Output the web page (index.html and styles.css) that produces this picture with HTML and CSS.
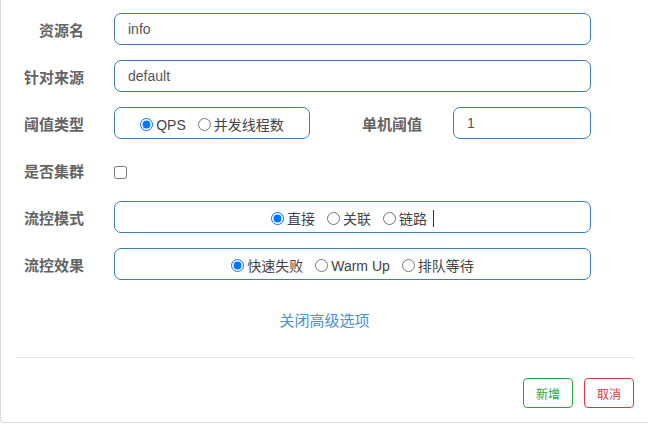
FILE: index.html
```html
<!DOCTYPE html>
<html lang="zh-CN">
<head>
    <meta charset="UTF-8">
    <title>新增流控规则</title>
    <link rel="stylesheet" href="styles.css">
</head>
<body>
    <div class="dialog">
        <form class="form">
            <!--资源名-->
            <div class="row">
                <label class="label">资源名</label>
                <input class="input" type="text" value="info">
            </div>
            <!--针对来源-->
            <div class="row">
                <label class="label">针对来源</label>
                <input class="input" type="text" value="default">
            </div>
            <!--阈值类型 + 单机阈值-->
            <div class="row">
                <label class="label">阈值类型</label>
                <div class="split">
                    <div class="box">
                        <label class="radio"><input type="radio" name="grade" checked>QPS</label>
                        <label class="radio"><input type="radio" name="grade">并发线程数</label>
                    </div>
                    <label class="label">单机阈值</label>
                    <input class="input" type="text" value="1">
                </div>
            </div>
            <!--是否集群-->
            <div class="row">
                <label class="label">是否集群</label>
                <div class="check"><input type="checkbox"></div>
            </div>
            <!--流控模式-->
            <div class="row">
                <label class="label">流控模式</label>
                <div class="box">
                    <label class="radio"><input type="radio" name="strategy" checked>直接</label>
                    <label class="radio"><input type="radio" name="strategy">关联</label>
                    <label class="radio"><input type="radio" name="strategy">链路</label>
                    <span class="caret"></span>
                </div>
            </div>
            <!--流控效果-->
            <div class="row">
                <label class="label">流控效果</label>
                <div class="box">
                    <label class="radio"><input type="radio" name="behavior" checked>快速失败</label>
                    <label class="radio"><input type="radio" name="behavior">Warm Up</label>
                    <label class="radio"><input type="radio" name="behavior">排队等待</label>
                </div>
            </div>
        </form>
        <div class="more"><a href="#">关闭高级选项</a></div>
        <div class="footer">
            <button class="btn btn-add" type="button">新增</button>
            <button class="btn btn-cancel" type="button">取消</button>
        </div>
    </div>
</body>
</html>
```

FILE: styles.css
```css
*{
    padding: 0;
    margin: 0;
    box-sizing: border-box;
}
body{
    overflow: hidden;
    background-color: #fff;
    font-family: "Liberation Sans", "Noto Sans CJK SC", sans-serif;
    font-size: 14px;
    color: #444;
}
.dialog{
    width: 648px;
    height: 423px;
    border-left: 1px solid #dcdcdc;
    border-bottom: 1px solid #dcdcdc;
    border-bottom-left-radius: 4px;
}
.form{
    display: flex;
    flex-direction: column;
    gap: 15px;
    padding: 13px 57px 0 0;
}
.row{
    display: grid;
    grid-template-columns: 83px 1fr;
    column-gap: 30px;
    align-items: center;
    height: 32px;
}
.label{
    padding-top: 3px;
    text-align: right;
    font-size: 15px;
    font-weight: bold;
    color: #636363;
    line-height: 20px;
    white-space: nowrap;
}
.input{
    width: 100%;
    height: 32px;
    padding: 0 13px;
    border: 1px solid #3d7cba;
    border-radius: 7px;
    font-family: inherit;
    font-size: 14px;
    color: #555;
    outline: none;
}
.split{
    display: grid;
    grid-template-columns: 196px 1fr 138px;
    column-gap: 31px;
    align-items: center;
}
.box{
    display: flex;
    justify-content: center;
    align-items: center;
    gap: 12px;
    height: 32px;
    padding-top: 3px;
    border: 1px solid #3d7cba;
    border-radius: 7px;
}
.radio{
    display: inline-flex;
    align-items: center;
    gap: 3px;
    font-size: 14px;
    line-height: 18px;
    color: #444;
    white-space: nowrap;
}
.radio input{
    margin: 0;
    width: 13px;
    height: 13px;
}
.caret{
    display: inline-block;
    width: 1px;
    height: 17px;
    margin-left: -6px;
    background-color: #333;
}
.check{
    display: flex;
    align-items: center;
    padding-top: 5px;
}
.check input{
    margin: 0;
    width: 13px;
    height: 13px;
}
.more{
    margin-top: 30px;
    text-align: center;
    line-height: 22px;
}
.more a{
    font-size: 15px;
    color: #4a8fd0;
    text-decoration: none;
}
.footer{
    display: flex;
    justify-content: flex-end;
    gap: 11px;
    margin: 25px 14px 0 15px;
    padding-top: 20px;
    border-top: 1px solid #e5e5e5;
}
.btn{
    width: 50px;
    height: 30px;
    background-color: #fff;
    border: 1px solid;
    border-radius: 4px;
    font-family: inherit;
    font-size: 12px;
    cursor: pointer;
}
.btn-add{
    border-color: #28a745;
    color: #28a745;
}
.btn-cancel{
    border-color: #dc3545;
    color: #dc3545;
}
```
